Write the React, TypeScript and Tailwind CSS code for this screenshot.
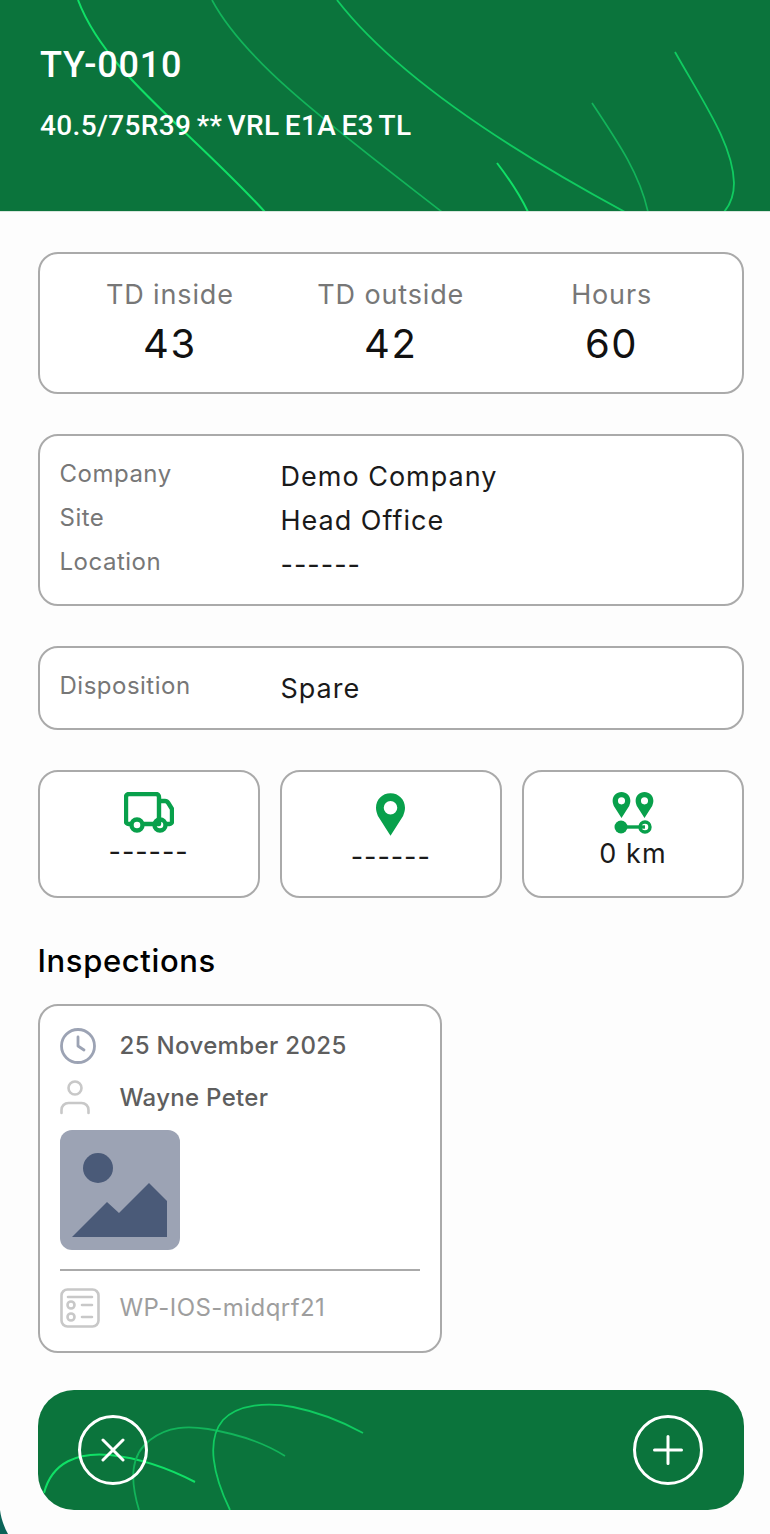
import React from 'react';

const Stat = ({ label, value }: { label: string; value: string }) => (
  <div className="flex flex-1 flex-col items-center">
    <span className="text-[27px] leading-[32px] tracking-[0.85px] text-[#777777]">{label}</span>
    <span className="mt-[9px] text-[40px] leading-[48px] tracking-[1.6px] text-[#111111]">{value}</span>
  </div>
);

const InfoRow = ({ label, value }: { label: string; value: string }) => (
  <div className="flex h-[44px] items-center">
    <span className="w-[221px] -translate-y-[2px] text-[24px] tracking-[0.5px] text-[#777777]">{label}</span>
    <span className="translate-y-[1px] text-[27px] tracking-[1px] text-[#1a1a1a]">{value}</span>
  </div>
);

const Dashes = () => <span className="text-[27px] leading-[32px] tracking-[0.9px] text-[#1a1a1a]">------</span>;

const Pin = ({ className, hole }: { className: string; hole: number }) => (
  <svg viewBox="0 0 30 44" className={className}>
    <path
      fill="#08a04b"
      fillRule="evenodd"
      d={`M15 0C6.5 0 0 6.5 0 15c0 3 .8 5.5 2 8.5L15 44l13-20.5c1.2-3 2-5.5 2-8.5C30 6.5 23.5 0 15 0Zm0 ${15 - hole}a${hole} ${hole} 0 1 1 0 ${hole * 2}a${hole} ${hole} 0 1 1 0-${hole * 2}Z`}
    />
  </svg>
);

export default function App() {
  return (
    <div className="relative h-[1534px] w-[770px] overflow-hidden bg-[#fdfdfd] font-['Inter',sans-serif]">
      <header className="relative h-[212px] overflow-hidden border-b border-[#d8e6dd] bg-[#0b743c] pl-[40px] pt-[43px]">
        <svg className="absolute inset-0" width="770" height="212" fill="none">
          <path d="M78 0C105 72 185 125 265 212" stroke="#10e066" strokeWidth="2" />
          <path d="M212 0C245 62 330 125 442 212" stroke="#12b45a" strokeWidth="1.7" />
          <path d="M337 0C395 75 510 150 625 212" stroke="#10cb60" strokeWidth="1.8" />
          <path d="M497 163C510 180 520 195 528 212" stroke="#10e066" strokeWidth="2" />
          <path d="M592 103C620 145 640 175 648 212" stroke="#12b45a" strokeWidth="1.7" />
          <path d="M675 52C705 105 733 145 734 183C734 195 730 205 724 212" stroke="#10cb60" strokeWidth="1.8" />
        </svg>
        <h1 className="relative font-['Roboto',sans-serif] text-[36px] font-medium leading-[44px] tracking-[0.8px] text-white">TY-0010</h1>
        <p className="relative mt-[23px] font-['Roboto',sans-serif] text-[28px] font-medium leading-[32px] tracking-[0.36px] text-white [word-spacing:-2px]">40.5/75R39 ** VRL E1A E3 TL</p>
      </header>

      <main className="flex flex-col pl-[37.5px] pr-[26px] pt-[40px]">
        <section className="flex h-[142px] items-center rounded-[20px] border-2 border-[#aaaaaa] bg-white px-[20px]">
          <Stat label="TD inside" value="43" />
          <Stat label="TD outside" value="42" />
          <Stat label="Hours" value="60" />
        </section>

        <section className="mt-[40px] flex h-[172px] flex-col justify-center rounded-[20px] border-2 border-[#aaaaaa] bg-white px-[20px]">
          <InfoRow label="Company" value="Demo Company" />
          <InfoRow label="Site" value="Head Office" />
          <InfoRow label="Location" value="------" />
        </section>

        <section className="mt-[40px] flex h-[84px] flex-col justify-center rounded-[20px] border-2 border-[#aaaaaa] bg-white px-[20px]">
          <InfoRow label="Disposition" value="Spare" />
        </section>

        <section className="mt-[40px] grid h-[128px] grid-cols-3 gap-[20px]">
          <div className="flex flex-col items-center rounded-[20px] border-2 border-[#aaaaaa] bg-white pt-[20px]">
            <svg viewBox="0 0 50 41" className="h-[41px] w-[50px]" fill="none" stroke="#08a04b" strokeWidth="4.4" strokeLinejoin="round">
              <path d="M6 32H4.5A2.5 2.5 0 0 1 2 29.5V5a3 3 0 0 1 3-3h27a3 3 0 0 1 3 3v27H20" />
              <path d="M35 9h6c1.5 0 2.5.7 3.3 2l3.7 6v12.5a2.5 2.5 0 0 1-2.5 2.5H43" />
              <circle cx="13" cy="33" r="5.5" />
              <circle cx="36" cy="33" r="5.5" />
            </svg>
            <div className="mt-[3px]"><Dashes /></div>
          </div>
          <div className="flex flex-col items-center rounded-[20px] border-2 border-[#aaaaaa] bg-white pt-[21px]">
            <Pin className="h-[43px] w-[29px]" hole={7} />
            <div className="mt-[5px]"><Dashes /></div>
          </div>
          <div className="flex flex-col items-center rounded-[20px] border-2 border-[#aaaaaa] bg-white pt-[20px]">
            <div className="flex gap-[4px]">
              <Pin className="h-[26px] w-[19px]" hole={6} />
              <Pin className="h-[26px] w-[19px]" hole={6} />
            </div>
            <svg viewBox="0 0 40 14" className="mt-[2px] h-[14px] w-[40px]" fill="none">
              <circle cx="8" cy="7" r="6.5" fill="#08a04b" />
              <path d="M12 7h20" stroke="#08a04b" strokeWidth="3.4" />
              <circle cx="32" cy="7" r="5" stroke="#08a04b" strokeWidth="3.4" />
            </svg>
            <span className="mt-[5px] text-[27px] leading-[30px] tracking-[1.1px] text-[#1a1a1a]">0 km</span>
          </div>
        </section>

        <h2 className="mt-[44px] text-[31px] font-medium leading-[38px] tracking-[0.62px] text-black">Inspections</h2>

        <section className="mt-[24px] h-[349px] w-[404px] rounded-[20px] border-2 border-[#aaaaaa] bg-white px-[20px] pt-[20px]">
          <div className="flex h-[40px] items-center gap-[24px]">
            <svg viewBox="0 0 36 36" className="h-[36px] w-[36px]" fill="none" stroke="#9ca3b4" strokeWidth="2.8" strokeLinecap="round" strokeLinejoin="round">
              <circle cx="18" cy="18" r="16.5" />
              <path d="M18 9v9l6 4" />
            </svg>
            <span className="text-[24px] font-medium tracking-[0.35px] text-[#5e5e5e]">25 November 2025</span>
          </div>
          <div className="mt-[12px] flex h-[40px] items-center gap-[24px]">
            <svg viewBox="0 0 36 36" className="h-[36px] w-[36px]" fill="none" stroke="#c8c8c8" strokeWidth="2.6" strokeLinecap="round">
              <circle cx="15" cy="8" r="6.5" />
              <path d="M1.5 33v-3c0-4 3-7 7-7h13c4 0 7 3 7 7v3" />
            </svg>
            <span className="text-[24px] font-medium tracking-[0.3px] text-[#5e5e5e]">Wayne Peter</span>
          </div>
          <div className="mt-[12px] h-[120px] w-[120px]">
            <svg viewBox="0 0 120 120" className="h-full w-full">
              <rect width="120" height="120" rx="12" fill="#9ca3b4" />
              <circle cx="38" cy="38" r="15" fill="#4a5a78" />
              <path d="M12 107L47 72l12 11 30-30 18 18v36Z" fill="#4a5a78" />
            </svg>
          </div>
          <div className="mt-[19px] h-[2px] w-full bg-[#aaaaaa]" />
          <div className="mt-[17px] flex h-[40px] items-center gap-[20px]">
            <svg viewBox="0 0 40 40" className="h-[40px] w-[40px]" fill="none" stroke="#c8c8c8" strokeWidth="2.6" strokeLinecap="round">
              <rect x="1.5" y="1.5" width="37" height="37" rx="6" />
              <path d="M8 9h24M22 17h10M22 29h10" />
              <circle cx="11" cy="17" r="3.5" />
              <circle cx="11" cy="29" r="3.5" />
            </svg>
            <span className="text-[24px] tracking-[0.45px] text-[#9e9e9e]">WP-IOS-midqrf21</span>
          </div>
        </section>

        <footer className="relative mt-[37px] flex h-[120px] items-center justify-between overflow-hidden rounded-[36px] bg-[#0b743c] pl-[40px] pr-[41px]">
          <svg className="absolute inset-0" width="706" height="120" fill="none">
            <path d="M6 103C14 72 40 62 72 65C100 68 130 78 157 92" stroke="#10e066" strokeWidth="2" />
            <path d="M101 120C92 90 92 65 112 50C130 36 150 36 170 39C200 44 225 52 247 66" stroke="#12b45a" strokeWidth="1.8" />
            <path d="M192 120C175 85 168 50 185 30C200 14 230 12 255 17C280 22 305 32 325 43" stroke="#10cb60" strokeWidth="1.8" />
          </svg>
          <button className="relative flex h-[70px] w-[70px] items-center justify-center rounded-full border-[3px] border-white">
            <svg viewBox="0 0 24 24" className="h-[24px] w-[24px]" stroke="white" strokeWidth="3" strokeLinecap="round">
              <path d="M2 2l20 20M22 2L2 22" />
            </svg>
          </button>
          <button className="relative flex h-[70px] w-[70px] items-center justify-center rounded-full border-[3px] border-white">
            <svg viewBox="0 0 30 30" className="h-[30px] w-[30px]" stroke="white" strokeWidth="3" strokeLinecap="round">
              <path d="M15 1.5v27M1.5 15h27" />
            </svg>
          </button>
        </footer>
      </main>

      <svg className="absolute bottom-0 left-0" width="8" height="24" fill="none">
        <path d="M0 0C1 8 4 17 8 24H0Z" fill="#0b6458" />
      </svg>
    </div>
  );
}
